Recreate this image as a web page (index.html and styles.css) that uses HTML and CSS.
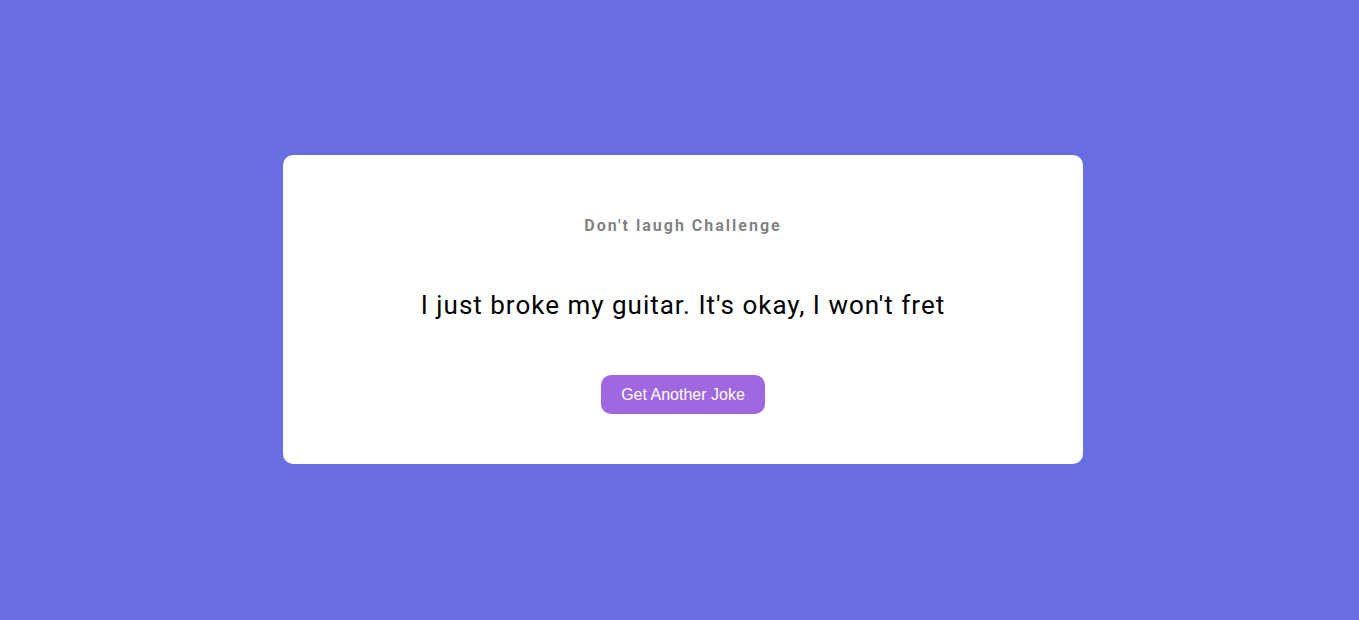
FILE: index.html
```html
<!DOCTYPE html>
<html lang="en">
<head>
<meta charset="UTF-8">
<title>Dad Jokes</title>
<link rel="stylesheet" href="styles.css">
</head>
<body>
<div class="container">
  <h3 class="title">Don't laugh Challenge</h3>
  <div class="joke">I just broke my guitar. It's okay, I won't fret</div>
  <button class="btn">Get Another Joke</button>
</div>
</body>
</html>
```
FILE: styles.css
```css
* { box-sizing: border-box; }
html, body { margin: 0; padding: 0; }
body {
  background-color: #686de0;
  font-family: Roboto, "Liberation Sans", sans-serif;
  height: 100vh;
  padding: 0 0 2px 7px;
  display: flex;
  align-items: center;
  justify-content: center;
  overflow: hidden;
}
.container {
  background-color: #fff;
  border-radius: 10px;
  width: 800px;
  padding: 61px 20px 50px;
  text-align: center;
  display: flex;
  flex-direction: column;
  align-items: center;
}
.title {
  margin: 0;
  font-size: 16px;
  font-weight: bold;
  letter-spacing: 2px;
  color: rgba(0, 0, 0, 0.5);
  line-height: 19px;
}
.joke {
  margin: 50px 0;
  font-size: 26px;
  letter-spacing: 1px;
  line-height: 40px;
  color: #000;
}
.btn {
  background-color: #9f68e0;
  color: #fff;
  border: 0;
  border-radius: 10px;
  height: 39px;
  padding: 1px 20px 0;
  font-family: "Liberation Sans", Arial, sans-serif;
  font-size: 16px;
  line-height: 18px;
  cursor: pointer;
}
```
